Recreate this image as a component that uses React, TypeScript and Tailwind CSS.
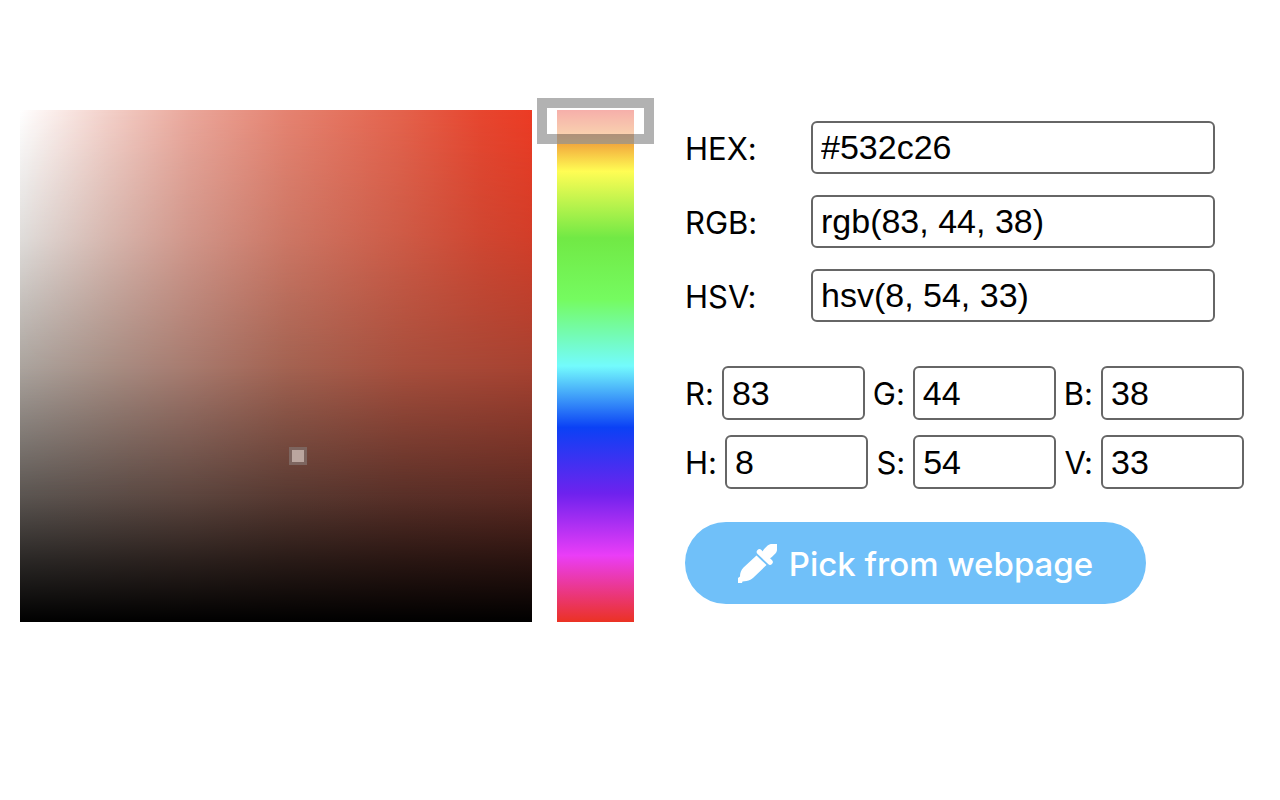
import { useState } from 'react';

const formats = [
  { id: 'hex', label: 'HEX:', value: '#532c26' },
  { id: 'rgb', label: 'RGB:', value: 'rgb(83, 44, 38)' },
  { id: 'hsv', label: 'HSV:', value: 'hsv(8, 54, 33)' },
];

const channels = [
  [
    { id: 'r', label: 'R:', value: '83' },
    { id: 'g', label: 'G:', value: '44' },
    { id: 'b', label: 'B:', value: '38' },
  ],
  [
    { id: 'h', label: 'H:', value: '8' },
    { id: 's', label: 'S:', value: '54' },
    { id: 'v', label: 'V:', value: '33' },
  ],
];

const fieldClass =
  "min-w-0 rounded-md border-2 border-[#666666] bg-white px-2 font-['Liberation_Sans',sans-serif] text-[34px] leading-10 text-black";

function Dropper() {
  return (
    <svg viewBox="0 0 39 39" className="size-[39px] shrink-0" fill="white" stroke="white" aria-hidden="true">
      <path d="M30 9l3.500-3.500" strokeWidth="11" strokeLinecap="round" />
      <path d="M32 0h7v7z" stroke="none" />
      <path d="M21.500 8l10.500 10" strokeWidth="5.500" strokeLinecap="round" />
      <path d="M18.500 11.500l10 9.500-13 12.500c-2 2-4 3-7 3.500L4.500 37.500 4 39H0v-5l2-1.500c0-3.500 1-6.500 3.500-9z" stroke="none" />
    </svg>
  );
}

// Horizontal ramps at full, half and quarter value, faded into each other from top to bottom
function SaturationArea() {
  return (
    <div className="relative aspect-square flex-1 bg-[linear-gradient(to_right,#5c5652,#5d463f_33%,#593a32_52%,#5a3028_75%,#5d2a22)]">
      <div className="absolute inset-0 bg-[linear-gradient(to_bottom,transparent_75%,rgba(0,0,0,0.55)_88%,#000)]" />
      <div className="absolute inset-0 bg-[linear-gradient(to_right,#aca59f,#a88f85_17%,#a87b6f_33%,#a46352_52%,#a84f3d_75%,#a84231)] mask-[linear-gradient(to_bottom,#000_50%,transparent_75%)]" />
      <div className="absolute inset-0 bg-[linear-gradient(to_right,#fff,#f3d0c9_17%,#eaa79b_33%,#e58371_52%,#e4614b_75%,#e7462f_90%,#ec3b24)] mask-[linear-gradient(to_bottom,#000,rgba(0,0,0,0.62)_25%,transparent_50%)]" />
      <div className="absolute top-[66%] left-[53%] size-[18px] -translate-x-0.5 -translate-y-px border-[3px] border-[#7d655f] bg-[#bba69f]" />
    </div>
  );
}

export default function App() {
  const [hue, setHue] = useState(8);

  return (
    <div className="min-h-screen bg-white pt-[110px] pr-9 pl-5 font-[Inter,sans-serif] text-black [font-feature-settings:'calt'_0]">
      <div className="flex items-start">
        <div className="flex flex-1 gap-[25px]">
          <SaturationArea />

          <div className="relative w-[77px] bg-[linear-gradient(to_bottom,#e8382b,#f19f3b_6%,#fffd54_12%,#71e945_25%,#75fb60_37%,#73fbfd_50%,#0b41f5_62%,#6f22ee_75%,#ea3df7_87%,#eb3223)]">
            <input
              aria-label="Hue"
              type="range"
              min={0}
              max={360}
              value={hue}
              onChange={(e) => setHue(Number(e.target.value))}
              className="absolute inset-0 h-full w-full cursor-pointer opacity-0 [writing-mode:vertical-lr]"
            />
            <div className="pointer-events-none absolute -inset-x-5 -top-3 h-[46px] border-10 border-black/30 bg-white/60" />
          </div>
        </div>

        <div className="mt-[11px] ml-[51px] w-[559px] shrink-0">
          <div className="mr-[29px] flex flex-col gap-[21px]">
            {formats.map((f) => (
              <div key={f.id} className="flex items-center">
                <label htmlFor={f.id} className="w-[126px] shrink-0 pt-0.5 text-[31px] leading-10">{f.label}</label>
                <input id={f.id} type="text" defaultValue={f.value} className={`${fieldClass} h-[53px] flex-1`} />
              </div>
            ))}
          </div>

          <div className="mt-11 flex flex-col gap-[15px]">
            {channels.map((row) => (
              <div key={row[0].id} className="flex items-center justify-between">
                {row.map((c) => (
                  <div key={c.id} className="flex items-center gap-2">
                    <label htmlFor={c.id} className="shrink-0 pt-0.5 text-[31px] leading-10">{c.label}</label>
                    <input id={c.id} type="text" defaultValue={c.value} className={`${fieldClass} h-[54px] w-[143px]`} />
                  </div>
                ))}
              </div>
            ))}
          </div>

          <button
            type="button"
            className="mt-[33px] flex h-[82px] w-[461px] cursor-pointer items-center justify-center gap-3 rounded-full bg-[#70c0f9] text-[33px] font-medium text-white"
          >
            <Dropper />
            <span className="pt-1">Pick from webpage</span>
          </button>
        </div>
      </div>
    </div>
  );
}
